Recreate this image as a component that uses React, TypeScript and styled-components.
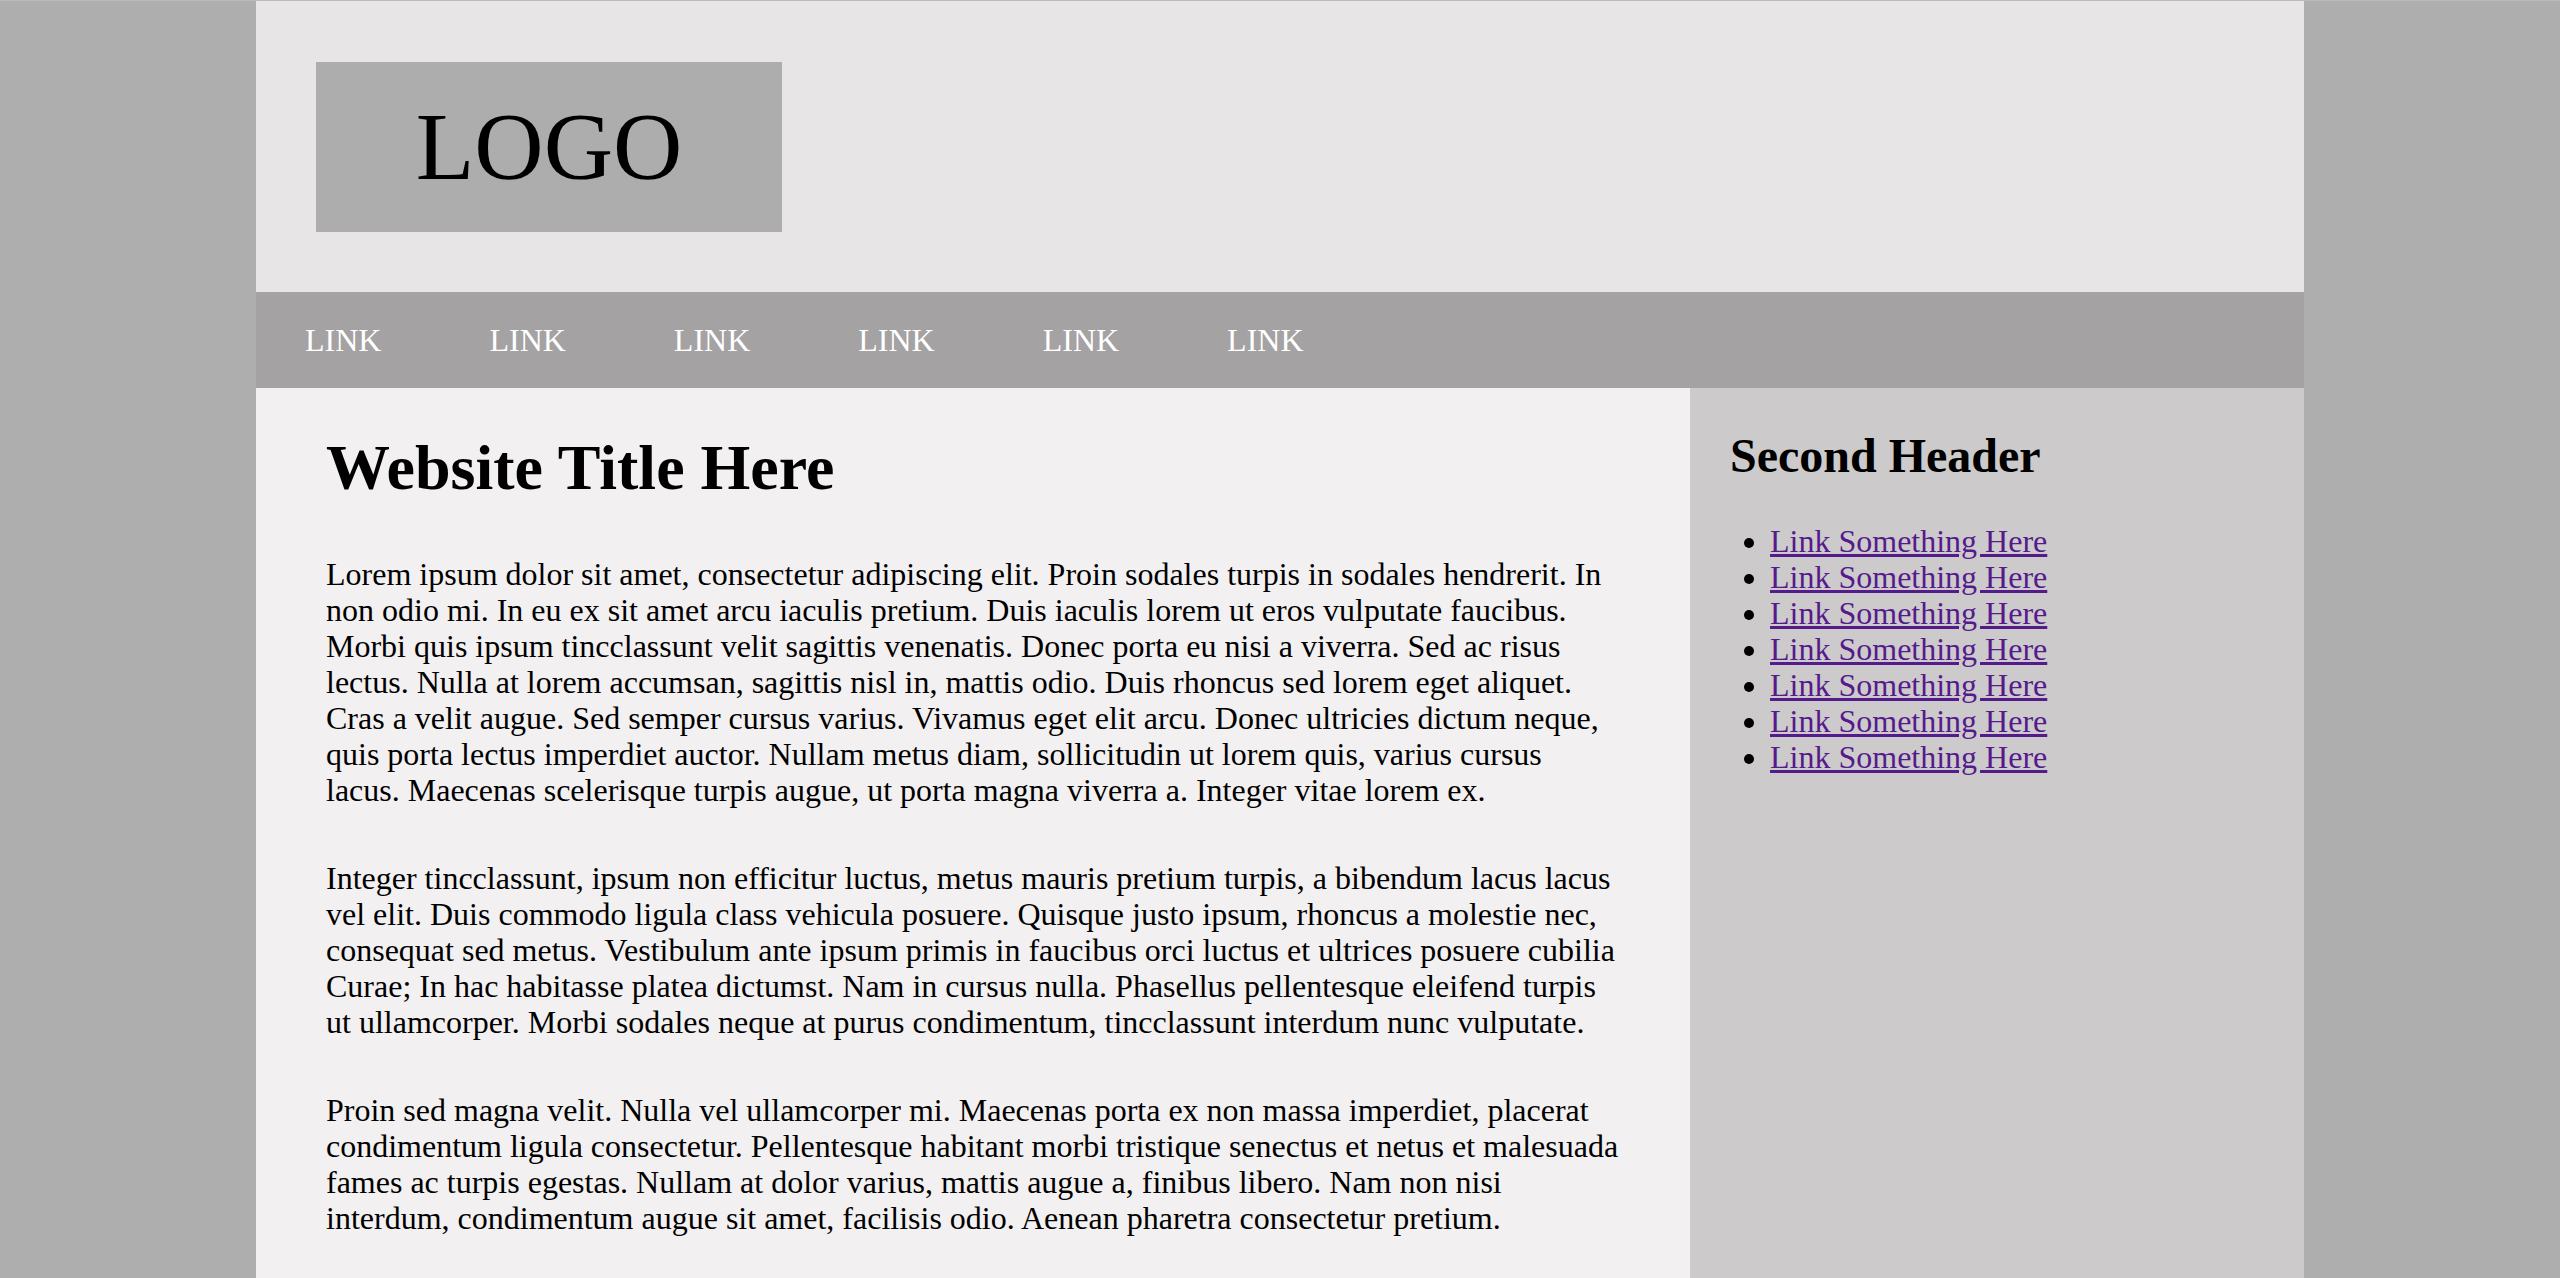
import React from "react";
import styled, { createGlobalStyle } from "styled-components";

const GlobalStyle = createGlobalStyle`
  html, body {
    margin: 0;
    padding: 0;
  }
  body {
    background: #aeaeae;
    border-top: 1px solid #bcbaba;
    font-family: "Liberation Serif", "Times New Roman", Times, serif;
    font-size: 32px;
    line-height: 36px;
    color: #000;
  }
`;

const Page = styled.div`
  width: 2048px;
  margin: 0 auto;
  display: flex;
  flex-direction: column;
  min-height: 1277px;
`;

const Header = styled.header`
  background: #e7e5e6;
  padding: 61px 60px 60px;
  display: flex;
`;

const LogoBox = styled.div`
  width: 466px;
  height: 170px;
  background: #adadad;
  display: flex;
  align-items: center;
  justify-content: center;
  font-size: 96px;
  line-height: 1;
  box-sizing: border-box;
`;

const Nav = styled.nav`
  background: #a4a2a3;
  height: 96px;
  display: flex;
  align-items: center;
  gap: 108px;
  padding-left: 49px;
`;

const NavLink = styled.a`
  color: #fff;
  text-decoration: none;
  font-size: 32px;
  text-transform: uppercase;
`;

const Body = styled.div`
  display: flex;
  flex: 1;
`;

const Main = styled.main`
  width: 1434px;
  flex: none;
  background: #f3f0f1;
  padding: 0 70px;
  box-sizing: border-box;
  display: flow-root;
`;

const Title = styled.h1`
  font-size: 64px;
  line-height: 72px;
  font-weight: bold;
  margin: 44px 0 0;
`;

const Paragraph = styled.p`
  margin: 52px 0;
`;

const Sidebar = styled.aside`
  flex: 1;
  background: #cccacb;
  padding: 0 40px;
  display: flow-root;
`;

const SideTitle = styled.h2`
  font-size: 48px;
  line-height: 54px;
  font-weight: bold;
  margin: 41px 0 40px;
`;

const LinkList = styled.ul`
  margin: 32px 0;
  padding-left: 40px;
  list-style: disc;
`;

const SideLink = styled.a`
  color: #551a8b;
  text-decoration: underline;
`;

const paragraphs = [
  "Lorem ipsum dolor sit amet, consectetur adipiscing elit. Proin sodales turpis in sodales hendrerit. In non odio mi. In eu ex sit amet arcu iaculis pretium. Duis iaculis lorem ut eros vulputate faucibus. Morbi quis ipsum tincclassunt velit sagittis venenatis. Donec porta eu nisi a viverra. Sed ac risus lectus. Nulla at lorem accumsan, sagittis nisl in, mattis odio. Duis rhoncus sed lorem eget aliquet. Cras a velit augue. Sed semper cursus varius. Vivamus eget elit arcu. Donec ultricies dictum neque, quis porta lectus imperdiet auctor. Nullam metus diam, sollicitudin ut lorem quis, varius cursus lacus. Maecenas scelerisque turpis augue, ut porta magna viverra a. Integer vitae lorem ex.",
  "Integer tincclassunt, ipsum non efficitur luctus, metus mauris pretium turpis, a bibendum lacus lacus vel elit. Duis commodo ligula class vehicula posuere. Quisque justo ipsum, rhoncus a molestie nec, consequat sed metus. Vestibulum ante ipsum primis in faucibus orci luctus et ultrices posuere cubilia Curae; In hac habitasse platea dictumst. Nam in cursus nulla. Phasellus pellentesque eleifend turpis ut ullamcorper. Morbi sodales neque at purus condimentum, tincclassunt interdum nunc vulputate.",
  "Proin sed magna velit. Nulla vel ullamcorper mi. Maecenas porta ex non massa imperdiet, placerat condimentum ligula consectetur. Pellentesque habitant morbi tristique senectus et netus et malesuada fames ac turpis egestas. Nullam at dolor varius, mattis augue a, finibus libero. Nam non nisi interdum, condimentum augue sit amet, facilisis odio. Aenean pharetra consectetur pretium.",
];

export default function App() {
  return (
    <>
      <GlobalStyle />
      <Page>
        <Header>
          <LogoBox>LOGO</LogoBox>
        </Header>
        <Nav>
          {Array.from({ length: 6 }).map((_, i) => (
            <NavLink key={i} href="#">
              Link
            </NavLink>
          ))}
        </Nav>
        <Body>
          <Main>
            <Title>Website Title Here</Title>
            {paragraphs.map((p, i) => (
              <Paragraph key={i}>{p}</Paragraph>
            ))}
          </Main>
          <Sidebar>
            <SideTitle>Second Header</SideTitle>
            <LinkList>
              {Array.from({ length: 7 }).map((_, i) => (
                <li key={i}>
                  <SideLink href="#">Link Something Here</SideLink>
                </li>
              ))}
            </LinkList>
          </Sidebar>
        </Body>
      </Page>
    </>
  );
}
